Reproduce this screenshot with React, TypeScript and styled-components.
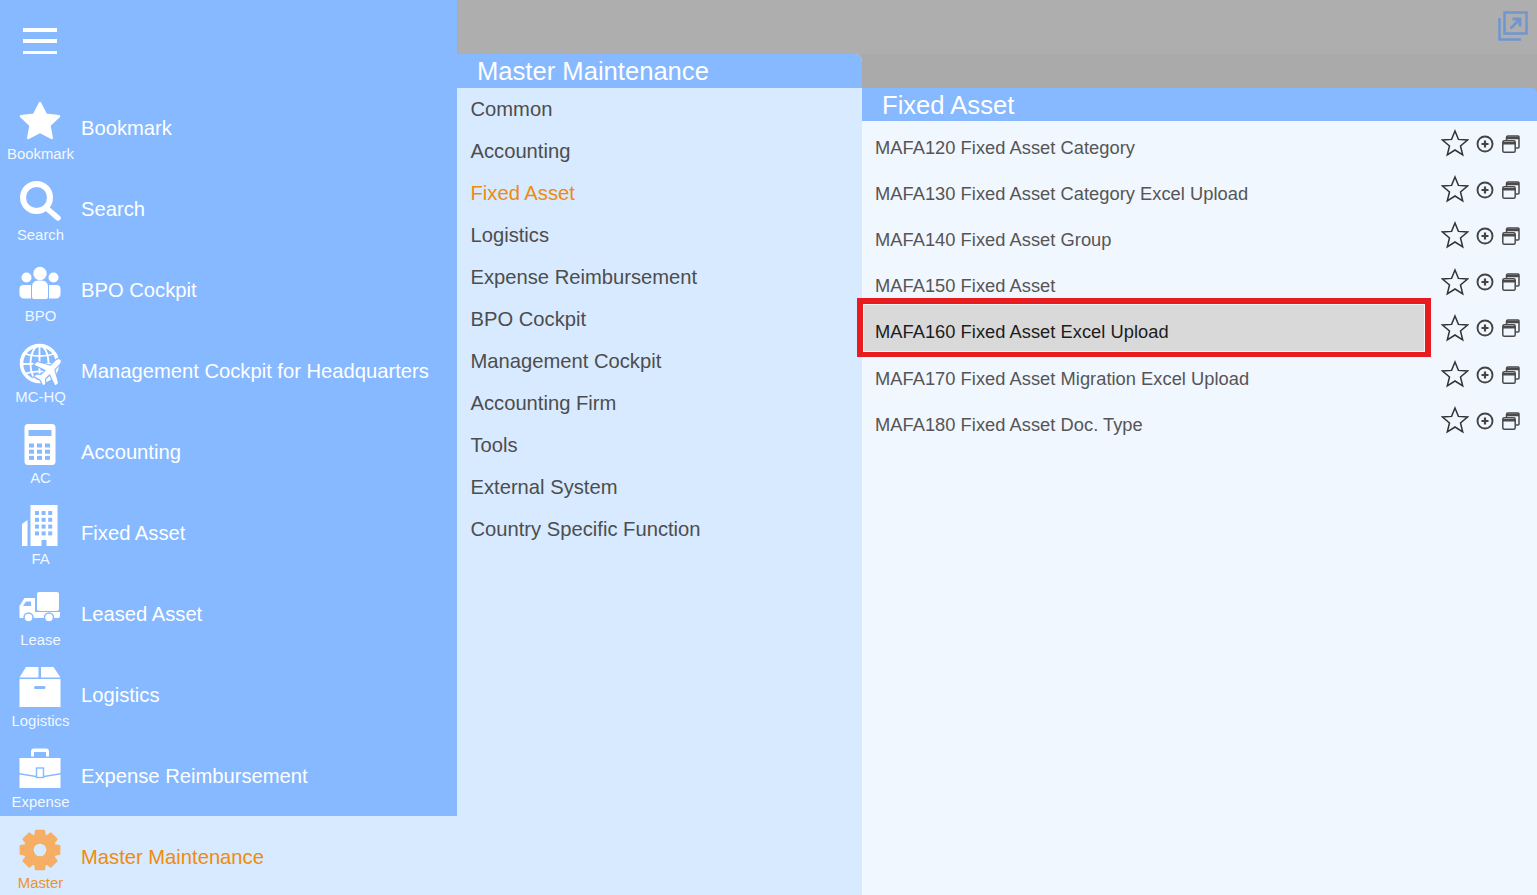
import React from "react";
import styled, { createGlobalStyle } from "styled-components";

const Global = createGlobalStyle`
  html, body { margin: 0; padding: 0; height: 895px; overflow: hidden; }
  body { font-family: "Liberation Sans", Arial, sans-serif; }
  * { box-sizing: border-box; }
`;
const Page = styled.div`
  display: grid;
  grid-template-columns: 458px 404px 1fr;
  grid-template-rows: 54px 1fr;
  width: 1537px;
  height: 895px;
  overflow: hidden;
  background: #aaaaaa;
`;
const Sidebar = styled.nav`
  grid-row: 1 / 3;
  background: #86b9ff;
  height: 895px;
  overflow: hidden;
  padding-top: 87px;
  position: relative;
  width: 457px;
`;
const Hamburger = styled.button`
  position: absolute;
  left: 23px;
  top: 28px;
  width: 34px;
  height: 26px;
  padding: 0;
  border: 0;
  background: transparent;
  display: flex;
  flex-direction: column;
  justify-content: space-between;
  span { display: block; height: 3.5px; background: #fff; }
`;
const NavRow = styled.div<{ $active?: boolean }>`
  height: 81px;
  display: grid;
  grid-template-columns: 81px 1fr;
  align-items: start;
  background: ${(p) => (p.$active ? "#d8eaff" : "transparent")};
  color: ${(p) => (p.$active ? "#ef8b0c" : "#fff")};
`;
const IconCol = styled.div`
  display: flex;
  flex-direction: column;
  align-items: center;
  padding-top: 13px;
  svg { display: block; width: 42px; height: 42px; margin-left: -1px; }
`;
const IconLabel = styled.span`
  font-size: 14.9px;
  line-height: 17px;
  margin-top: 4px;
  white-space: nowrap;
  opacity: 0.9;
`;
const NavText = styled.span`
  font-size: 20.2px;
  line-height: 24px;
  margin-top: 29px;
  white-space: nowrap;
`;
const TopBar = styled.header`
  grid-column: 2 / 4;
  background: #aeaeae;
  display: flex;
  justify-content: flex-end;
  padding: 10px 8px 0 0;
  svg { width: 32px; height: 32px; display: block; }
`;
const MenuColumn = styled.section`
  display: flex;
  flex-direction: column;
  background: #d8eaff;
  margin-left: -1px;
  border-top-right-radius: 7px;
  overflow: hidden;
  height: 841px;
`;
const MenuTitle = styled.h1`
  margin: 0;
  height: 34px;
  flex: none;
  background: #86b9ff;
  color: #fff;
  font-size: 25.6px;
  font-weight: 400;
  line-height: 34px;
  padding-left: 20px;
`;
const MenuItem = styled.div<{ $active?: boolean }>`
  height: 42px;
  line-height: 42px;
  padding-left: 13.5px;
  font-size: 20.2px;
  color: ${(p) => (p.$active ? "#ef8b0c" : "#4d4d4d")};
`;
const DetailColumn = styled.section`
  display: flex;
  flex-direction: column;
  height: 841px;
  padding-top: 34px;
`;
const DetailTitle = styled.h2`
  margin: 0;
  height: 33px;
  flex: none;
  background: #86b9ff;
  color: #fff;
  font-size: 25.6px;
  font-weight: 400;
  line-height: 35px;
  padding-left: 20px;
  border-top-right-radius: 5px;
`;
const DetailList = styled.div`
  flex: 1;
  background: #f1f7ff;
  padding-top: 3.5px;
`;
const DetailRow = styled.div`
  height: 46.2px;
  position: relative;
  display: flex;
  justify-content: space-between;
  align-items: center;
  padding: 0 17px 0 13px;
`;
const DetailText = styled.span<{ $hl?: boolean }>`
  position: relative;
  font-size: 18.3px;
  letter-spacing: 0.03px;
  color: ${(p) => (p.$hl ? "#1c1c1c" : "#555555")};
`;
const HighlightFrame = styled.div`
  position: absolute;
  left: -5px;
  top: -11.3px;
  width: 574px;
  height: 59px;
  border: 6px solid #e81c1f;
  border-bottom-width: 5px;
  background: #d9d9d9;
  box-shadow: inset 0 0 0 1px #f4f4f4;
`;
const Actions = styled.div`
  display: flex;
  align-items: center;
  position: relative;
  top: -4px;
`;
const StarIcon = styled.svg`
  width: 28px;
  height: 28px;
  margin-top: -1px;
  color: #333;
`;
const PlusIcon = styled.svg`
  width: 18px;
  height: 18px;
  margin-left: 7px;
  color: #444;
`;
const WinIcon = styled.svg`
  width: 18px;
  height: 18px;
  margin-left: 8px;
  color: #4a4a4a;
`;

const B = "#86b9ff";

function gearPath() {
  const c = 21;
  const outer = 19.8;
  const inner = 15.4;
  const pt = (r: number, deg: number) => {
    const a = (deg * Math.PI) / 180;
    return `${(c + r * Math.sin(a)).toFixed(2)} ${(c - r * Math.cos(a)).toFixed(2)}`;
  };
  let d = "";
  for (let i = 0; i < 8; i++) {
    const m = i * 45;
    d += `${i === 0 ? "M" : "L"}${pt(inner, m - 18)}L${pt(outer, m - 12)}L${pt(outer, m + 12)}L${pt(inner, m + 18)}`;
  }
  return d + "Z";
}

const icons: Record<string, React.ReactNode> = {
  star: (
    <svg viewBox="0 0 42 42">
      <polygon
        points="21,3 26.900,14.600 40,16.300 30.400,25.400 32.800,38 21,32 9.200,38 11.600,25.400 2,16.300 15.100,14.600"
        fill="#fff"
        stroke="#fff"
        strokeWidth="2.400"
        strokeLinejoin="round"
      />
    </svg>
  ),
  search: (
    <svg viewBox="0 0 42 42">
      <circle cx="17.500" cy="16.500" r="13.500" fill="none" stroke="#fff" strokeWidth="6" />
      <line x1="28.500" y1="28" x2="39" y2="37" stroke="#fff" strokeWidth="5.500" strokeLinecap="round" />
    </svg>
  ),
  bpo: (
    <svg viewBox="0 0 42 42">
      <circle cx="21" cy="11.500" r="6.700" fill="#fff" />
      <circle cx="7.500" cy="15.500" r="5" fill="#fff" />
      <circle cx="34.500" cy="15.500" r="5" fill="#fff" />
      <path d="M.500 27a4 4 0 0 1 4-4h7.500v13.500H5a4.500 4.500 0 0 1-4.500-4.500zM41.500 27a4 4 0 0 0-4-4H30v13.500h7a4.500 4.500 0 0 0 4.500-4.500z" fill="#fff" />
      <path d="M13 24a6 6 0 0 1 6-5.500h4a6 6 0 0 1 6 5.500v11a2 2 0 0 1-2 2H15a2 2 0 0 1-2-2z" fill="#fff" />
    </svg>
  ),
  globe: (
    <svg viewBox="0 0 42 42">
      <g fill="none" stroke="#fff">
        <circle cx="20.500" cy="20.500" r="18" strokeWidth="3.500" />
        <ellipse cx="20.500" cy="20.500" rx="9" ry="18" strokeWidth="1.800" />
        <line x1="20.500" y1="2" x2="20.500" y2="39" strokeWidth="1.800" />
        <path d="M5 10.500c9 3.500 22 3.500 31 0M3 21h35M5 31c9-3.500 22-3.500 31 0" strokeWidth="1.800" />
      </g>
      <g transform="translate(30 28) rotate(45) scale(1.060)">
        <path
          d="M0-15c1.600 0 2.500 2 2.500 4v6.500L14 2v3.500L2.500 1.500V8l3.500 3v2.500L0 11.500l-6 2V11l3.500-3V1.500L-14 5.500V2L-2.500-4.500V-11c0-2 .9-4 2.500-4z"
          fill="#fff"
          stroke={B}
          strokeWidth="2.200"
          paintOrder="stroke"
        />
      </g>
    </svg>
  ),
  calc: (
    <svg viewBox="0 0 42 42">
      <rect x="5.500" y="0" width="31" height="41" rx="3.500" fill="#fff" />
      <rect x="9.500" y="6" width="23" height="6" fill={B} />
      {[0, 1, 2].flatMap((r) =>
        [0, 1, 2].map((c) => <rect key={`${r}${c}`} x={10 + c * 8} y={19.500 + r * 6.200} width="5" height="4" fill={B} />)
      )}
    </svg>
  ),
  building: (
    <svg viewBox="0 0 42 42">
      <path d="M11.500 0h27v41H27.500v-6h-5v6H11.500zM3 41V19l5.500-4v26z" fill="#fff" />
      {[0, 1, 2, 3].flatMap((r) =>
        [0, 1, 2].map((c) => <rect key={`${r}${c}`} x={16 + c * 6.600} y={6 + r * 6.800} width="4" height="4" fill={B} />)
      )}
    </svg>
  ),
  truck: (
    <svg viewBox="0 0 42 42">
      <rect x="18" y="6" width="22" height="19" rx="2" fill="#fff" />
      <path d="M.500 32V20l5-8H16v14h25v4a2 2 0 0 1-2 2z" fill="#fff" />
      <path d="M4 20l3-4.500h5V20z" fill={B} />
      <circle cx="9.500" cy="31.500" r="4.500" fill="#fff" stroke={B} strokeWidth="1.500" />
      <circle cx="30" cy="31.500" r="4.500" fill="#fff" stroke={B} strokeWidth="1.500" />
    </svg>
  ),
  box: (
    <svg viewBox="0 0 42 42">
      <path d="M.500 10.500L7 0h12.500v10.500zM22 0h12.500L41.500 10.500H22zM.500 12h41v28H.500z" fill="#fff" />
      <rect x="15" y="19" width="11.500" height="3" rx="1.500" fill={B} />
    </svg>
  ),
  case: (
    <svg viewBox="0 0 42 42">
      <path d="M12 8.500V3.500a3 3 0 0 1 3-3h12a3 3 0 0 1 3 3v5h-3V4H15v4.500z" fill="#fff" />
      <path d="M.500 10h41v15l-18 3h-5l-18-3z" fill="#fff" />
      <path d="M.500 26.500l18 3h5l18-3V40H.500z" fill="#fff" />
      <rect x="17.500" y="20" width="7" height="9.500" fill="#fff" stroke={B} strokeWidth="1.400" />
    </svg>
  ),
  gear: (
    <svg viewBox="0 0 42 42">
      <path d={gearPath()} fill="#f5ae63" stroke="#f5ae63" strokeWidth="2" strokeLinejoin="round" />
      <circle cx="21" cy="21" r="6.300" fill="#d8eaff" />
    </svg>
  ),
};

const nav = [
  ["star", "Bookmark", "Bookmark"],
  ["search", "Search", "Search"],
  ["bpo", "BPO", "BPO Cockpit"],
  ["globe", "MC-HQ", "Management Cockpit for Headquarters"],
  ["calc", "AC", "Accounting"],
  ["building", "FA", "Fixed Asset"],
  ["truck", "Lease", "Leased Asset"],
  ["box", "Logistics", "Logistics"],
  ["case", "Expense", "Expense Reimbursement"],
  ["gear", "Master", "Master Maintenance"],
];
const menu = [
  "Common",
  "Accounting",
  "Fixed Asset",
  "Logistics",
  "Expense Reimbursement",
  "BPO Cockpit",
  "Management Cockpit",
  "Accounting Firm",
  "Tools",
  "External System",
  "Country Specific Function",
];
const detail = [
  "MAFA120 Fixed Asset Category",
  "MAFA130 Fixed Asset Category Excel Upload",
  "MAFA140 Fixed Asset Group",
  "MAFA150 Fixed Asset",
  "MAFA160 Fixed Asset Excel Upload",
  "MAFA170 Fixed Asset Migration Excel Upload",
  "MAFA180 Fixed Asset Doc. Type",
];

export default function App() {
  return (
    <Page>
      <Global />
      <Sidebar>
        <Hamburger aria-label="menu">
          <span />
          <span />
          <span />
        </Hamburger>
        {nav.map(([icon, label, text]) => (
          <NavRow key={label} $active={label === "Master"}>
            <IconCol>
              {icons[icon]}
              <IconLabel>{label}</IconLabel>
            </IconCol>
            <NavText>{text}</NavText>
          </NavRow>
        ))}
      </Sidebar>
      <TopBar>
        <svg viewBox="0 0 32 32" fill="none" stroke="#7096cf">
          <rect x="7.500" y="2.500" width="22" height="21" strokeWidth="2.500" />
          <path d="M2.500 8v21.500H24" strokeWidth="2.500" />
          <path d="M13.500 18.500l9-9M15.500 9h7.500v7.500" strokeWidth="2.800" />
        </svg>
      </TopBar>
      <MenuColumn>
        <MenuTitle>Master Maintenance</MenuTitle>
        {menu.map((m) => (
          <MenuItem key={m} $active={m === "Fixed Asset"}>
            {m}
          </MenuItem>
        ))}
      </MenuColumn>
      <DetailColumn>
        <DetailTitle>Fixed Asset</DetailTitle>
        <DetailList>
          {detail.map((d, i) => (
            <DetailRow key={d}>
              {i === 4 && <HighlightFrame />}
              <DetailText $hl={i === 4}>{d}</DetailText>
              <Actions>
                <StarIcon viewBox="0 0 28 28" fill="none" stroke="currentColor" strokeWidth="1.500" strokeLinejoin="miter">
                  <polygon points="14,2 17.400,10.400 26.500,11 19.500,16.900 21.700,25.800 14,21 6.300,25.800 8.500,16.900 1.500,11 10.600,10.400" />
                </StarIcon>
                <PlusIcon viewBox="0 0 18 18" fill="none" stroke="currentColor">
                  <circle cx="9" cy="9" r="7.500" strokeWidth="1.900" />
                  <path d="M5.500 9h7M9 5.500v7" strokeWidth="2.200" />
                </PlusIcon>
                <WinIcon viewBox="0 0 18 18" fill="none" stroke="currentColor" strokeWidth="1.500">
                  <path d="M4.500 5V2.500A1.500 1.500 0 0 1 6 1h10a1 1 0 0 1 1 1v10a1 1 0 0 1-1 1h-2" />
                  <rect x=".800" y="5.800" width="12.400" height="11.400" rx="1.500" />
                  <path d="M.800 8.300h12.400M4.500 3h12.500" strokeWidth="2.400" />
                </WinIcon>
              </Actions>
            </DetailRow>
          ))}
        </DetailList>
      </DetailColumn>
    </Page>
  );
}
